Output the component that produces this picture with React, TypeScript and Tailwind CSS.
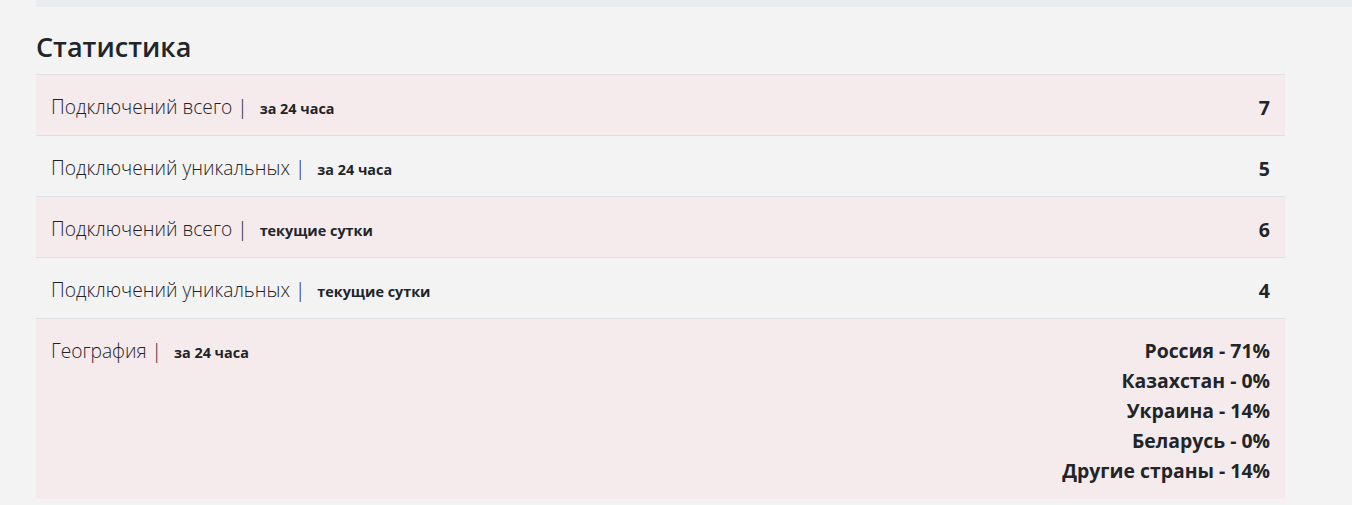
import React from "react";

const rows = [
  { label: "Подключений всего", sub: "за 24 часа", value: "7", pink: true },
  { label: "Подключений уникальных", sub: "за 24 часа", value: "5", pink: false },
  { label: "Подключений всего", sub: "текущие сутки", value: "6", pink: true },
  { label: "Подключений уникальных", sub: "текущие сутки", value: "4", pink: false },
];

const countries = [
  "Россия - 71%",
  "Казахстан - 0%",
  "Украина - 14%",
  "Беларусь - 0%",
  "Другие страны - 14%",
];

export default function App() {
  return (
    <div
      className="min-h-[505px] bg-[#f3f3f3] text-[#212529]"
      style={{ fontFamily: '"Segoe UI", "Open Sans", sans-serif' }}
    >
      <div className="ml-[36px] h-[7px] bg-[#e9ecef]" />
      <div className="ml-[36px] w-[1249px]">
        <h3 className="mt-[22px] mb-[9px] text-[27px] font-semibold leading-[36px]">Статистика</h3>
        <div className="border-t border-[#dee2e6]">
          {rows.map((r, i) => (
            <div
              key={i}
              className={`flex h-[61px] items-center justify-between border-b border-[#dee2e6] px-[15px] pt-[5px] leading-[28px] ${
                r.pink ? "bg-[#f5eaec]" : "bg-[#f3f3f3]"
              }`}
            >
              <div className="flex items-baseline">
                <span className="text-[19.2px] font-light text-[#1f2326]">{r.label} |</span>
                <span className="ml-[12px] text-[14.4px] font-bold">{r.sub}</span>
              </div>
              <span className="text-[19.5px] font-bold">{r.value}</span>
            </div>
          ))}
          <div className="flex justify-between bg-[#f5eaec] px-[15px] pt-[17px] pb-[13px] leading-[30px]">
            <div className="flex items-baseline">
              <span className="text-[19.2px] font-light text-[#1f2326]">География |</span>
              <span className="ml-[12px] text-[14.4px] font-bold">за 24 часа</span>
            </div>
            <div className="flex flex-col items-end text-[19.4px] font-bold">
              {countries.map((c) => (
                <span key={c}>{c}</span>
              ))}
            </div>
          </div>
        </div>
      </div>
    </div>
  );
}
